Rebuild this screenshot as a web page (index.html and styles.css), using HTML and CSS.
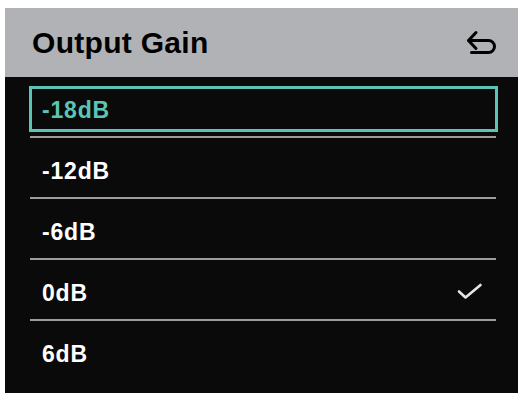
FILE: index.html
```html
<!DOCTYPE html>
<html>
<head>
<meta charset="utf-8">
<link rel="stylesheet" href="styles.css">
</head>
<body>
<div class="panel">
  <div class="header">
    <span class="title">Output Gain</span>
    <svg class="back" width="32" height="28" viewBox="0 0 32 28">
      <path d="M10 4.5 L2.5 12.5 L10 20.5" fill="none" stroke="#000" stroke-width="3" stroke-linecap="round" stroke-linejoin="round"/>
      <path d="M3 12.5 H22.5 A6 6 0 0 1 22.5 24.5 H5.5" fill="none" stroke="#000" stroke-width="3" stroke-linecap="round" stroke-linejoin="round"/>
    </svg>
  </div>
  <ul class="list">
    <li class="item focused"><span class="label">-18dB</span></li>
    <li class="item"><span class="label">-12dB</span></li>
    <li class="item"><span class="label">-6dB</span></li>
    <li class="item"><span class="label">0dB</span>
      <svg class="check" width="26" height="18" viewBox="0 0 26 18">
        <path d="M2 8.5 L8.5 14.5 L23.5 2" fill="none" stroke="#e6e6e6" stroke-width="2.6" stroke-linecap="round" stroke-linejoin="round"/>
      </svg>
    </li>
    <li class="item last"><span class="label">6dB</span></li>
  </ul>
</div>
</body>
</html>
```
FILE: styles.css
```css
html, body {
  margin: 0;
  padding: 0;
  background: #ffffff;
}
body {
  font-family: "Liberation Sans", Arial, sans-serif;
}
.panel {
  margin: 8px 0 0 5px;
  width: 513px;
  height: 385px;
  background: #0b0a0b;
  display: flex;
  flex-direction: column;
}
.header {
  height: 69px;
  background: #b0b2b5;
  display: flex;
  align-items: center;
  justify-content: space-between;
  padding: 0 20px 0 27px;
  box-sizing: border-box;
}
.title {
  font-size: 30px;
  font-weight: bold;
  letter-spacing: 0.3px;
  color: #000;
  margin-top: 1px;
}
.back {
  display: block;
  margin-top: -1px;
}
.list {
  list-style: none;
  margin: 0;
  padding: 9px 20px 0 24px;
}
.item {
  position: relative;
  height: 46px;
  box-sizing: border-box;
  border: 3px solid transparent;
  padding: 0 12px 0 10px;
  display: flex;
  align-items: center;
  justify-content: space-between;
  font-size: 23px;
  font-weight: bold;
  letter-spacing: 0.8px;
  color: #ffffff;
}
.item + .item {
  margin-top: 15px;
}
.item::after {
  content: "";
  position: absolute;
  left: -2px;
  right: -1px;
  bottom: -9px;
  height: 2px;
  background: #9c9c9c;
}
.item.last::after {
  display: none;
}
.item.focused {
  border-color: #5cc4b6;
  color: #5cc4b6;
}
.label {
  margin-top: 2px;
}
.check {
  display: block;
}
```
